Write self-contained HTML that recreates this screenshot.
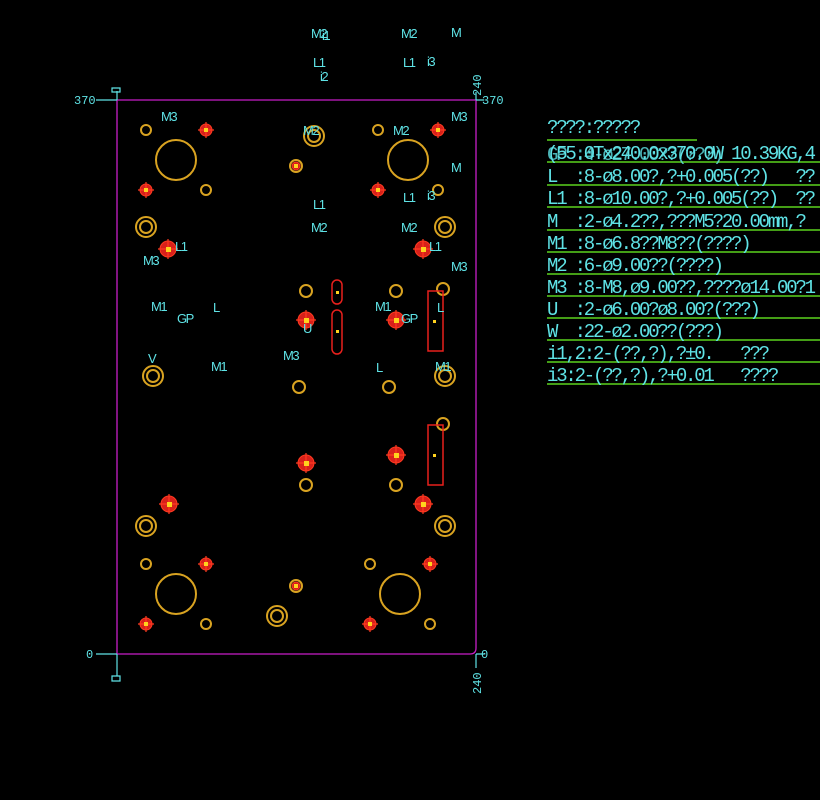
<!DOCTYPE html>
<html><head><meta charset="utf-8"><style>
html,body{margin:0;padding:0;background:#000;width:820px;height:800px;overflow:hidden}
svg{display:block}
.c{fill:#5fe3e6;font-family:"Liberation Mono",monospace}
.s{font-size:13px;letter-spacing:-1.5px;font-family:"Liberation Sans",sans-serif}
.t{font-size:19px;letter-spacing:-2.2px}
</style></head><body>
<svg width="820" height="800" viewBox="0 0 820 800" xmlns="http://www.w3.org/2000/svg">
<path d="M117 100 H476 V648 Q476 654 470 654 H117 Z" fill="none" stroke="#c81ec8" stroke-width="1.3"/>
<g stroke="#5fe3e6" fill="none" stroke-width="1.2">
<path d="M96 100 H117 M117 91 V100 M112 88 h8 v4 h-8z"/>
<path d="M476 100 H484 M476 92 V100"/>
<path d="M96 654 H117 M117 654 V676 M112 676 h8 v5 h-8z"/>
<path d="M476 654 H484 M476 654 V668"/>
</g>
<g class="c" font-size="12">
<text x="74" y="104">370</text>
<text x="482" y="104">370</text>
<text x="86" y="658">0</text>
<text x="481" y="658">0</text>
<text transform="translate(481,96) rotate(-90)">240</text>
<text transform="translate(481,694) rotate(-90)">240</text>
</g>
<g fill="none" stroke="#d9a321" stroke-width="2">
<circle cx="176" cy="160" r="20"/><circle cx="408" cy="160" r="20"/>
<circle cx="176" cy="594" r="20"/><circle cx="400" cy="594" r="20"/>
<circle cx="146" cy="130" r="5"/><circle cx="206" cy="190" r="5"/>
<circle cx="378" cy="130" r="5"/><circle cx="438" cy="190" r="5"/>
<circle cx="146" cy="564" r="5"/><circle cx="206" cy="624" r="5"/>
<circle cx="370" cy="564" r="5"/><circle cx="430" cy="624" r="5"/>
<circle cx="146" cy="227" r="10"/><circle cx="146" cy="227" r="6"/>
<circle cx="445" cy="227" r="10"/><circle cx="445" cy="227" r="6"/>
<circle cx="146" cy="526" r="10"/><circle cx="146" cy="526" r="6"/>
<circle cx="445" cy="526" r="10"/><circle cx="445" cy="526" r="6"/>
<circle cx="153" cy="376" r="10"/><circle cx="153" cy="376" r="6"/>
<circle cx="445" cy="376" r="10"/><circle cx="445" cy="376" r="6"/>
<circle cx="314" cy="136" r="10"/><circle cx="314" cy="136" r="6"/>
<circle cx="277" cy="616" r="10"/><circle cx="277" cy="616" r="6"/>
<circle cx="306" cy="291" r="6"/><circle cx="396" cy="291" r="6"/>
<circle cx="299" cy="387" r="6"/><circle cx="389" cy="387" r="6"/>
<circle cx="306" cy="485" r="6"/><circle cx="396" cy="485" r="6"/>
<circle cx="443" cy="289" r="6"/><circle cx="443" cy="424" r="6"/>
<circle cx="296" cy="166" r="6"/><circle cx="296" cy="586" r="6"/>
</g>
<g fill="#d8201a" stroke="#ff3a20" stroke-width="1">
<circle cx="206" cy="130" r="6"/><circle cx="146" cy="190" r="6"/>
<circle cx="438" cy="130" r="6"/><circle cx="378" cy="190" r="6"/>
<circle cx="206" cy="564" r="6"/><circle cx="146" cy="624" r="6"/>
<circle cx="430" cy="564" r="6"/><circle cx="370" cy="624" r="6"/>
<circle cx="168" cy="249" r="8"/><circle cx="423" cy="249" r="8"/>
<circle cx="306" cy="320" r="8"/><circle cx="396" cy="320" r="8"/>
<circle cx="306" cy="463" r="8"/><circle cx="396" cy="455" r="8"/>
<circle cx="169" cy="504" r="8"/><circle cx="423" cy="504" r="8"/>
<circle cx="296" cy="166" r="4"/><circle cx="296" cy="586" r="4"/>
</g>
<g stroke="#ff3a20" stroke-width="1.2">
<path d="M198 130h16M206 122v16M138 190h16M146 182v16M430 130h16M438 122v16M370 190h16M378 182v16M198 564h16M206 556v16M138 624h16M146 616v16M422 564h16M430 556v16M362 624h16M370 616v16"/>
<path d="M158 249h20M168 239v20M413 249h20M423 239v20M296 320h20M306 310v20M386 320h20M396 310v20M296 463h20M306 453v20M386 455h20M396 445v20M159 504h20M169 494v20M413 504h20M423 494v20"/>
</g>
<g fill="#ffd21e">
<rect x="204" y="128" width="4" height="4"/><rect x="144" y="188" width="4" height="4"/>
<rect x="436" y="128" width="4" height="4"/><rect x="376" y="188" width="4" height="4"/>
<rect x="204" y="562" width="4" height="4"/><rect x="144" y="622" width="4" height="4"/>
<rect x="428" y="562" width="4" height="4"/><rect x="368" y="622" width="4" height="4"/>
<rect x="166" y="247" width="5" height="5"/><rect x="421" y="247" width="5" height="5"/>
<rect x="304" y="318" width="5" height="5"/><rect x="394" y="318" width="5" height="5"/>
<rect x="304" y="461" width="5" height="5"/><rect x="394" y="453" width="5" height="5"/>
<rect x="167" y="502" width="5" height="5"/><rect x="421" y="502" width="5" height="5"/>
<rect x="294" y="164" width="4" height="4"/><rect x="294" y="584" width="4" height="4"/>
</g>
<g fill="none" stroke="#e8201c" stroke-width="1.5">
<rect x="332" y="280" width="10" height="24" rx="5"/>
<rect x="332" y="310" width="10" height="44" rx="5"/>
<rect x="428" y="291" width="15" height="60"/>
<rect x="428" y="425" width="15" height="60"/>
</g>
<g fill="#ffd21e"><rect x="336" y="291" width="3" height="3"/><rect x="336" y="330" width="3" height="3"/><rect x="433" y="320" width="3" height="3"/><rect x="433" y="454" width="3" height="3"/></g>
<g class="c s">
<text x="311" y="38">M2</text><text x="322" y="40">i1</text>
<text x="401" y="38">M2</text><text x="451" y="37">M</text>
<text x="313" y="67">L1</text><text x="320" y="81">i2</text>
<text x="403" y="67">L1</text><text x="427" y="66">i3</text>
<text x="161" y="121">M3</text><text x="451" y="121">M3</text>
<text x="303" y="135">M2</text><text x="393" y="135">M2</text>
<text x="451" y="172">M</text>
<text x="313" y="209">L1</text><text x="403" y="202">L1</text><text x="427" y="200">i3</text>
<text x="311" y="232">M2</text><text x="401" y="232">M2</text>
<text x="175" y="251">L1</text><text x="429" y="251">L1</text>
<text x="143" y="265">M3</text><text x="451" y="271">M3</text>
<text x="151" y="311">M1</text><text x="213" y="312">L</text>
<text x="177" y="323">GP</text>
<text x="375" y="311">M1</text><text x="437" y="312">L</text>
<text x="401" y="323">GP</text>
<text x="303" y="333">U</text>
<text x="283" y="360">M3</text>
<text x="148" y="363">V</text>
<text x="211" y="371">M1</text><text x="376" y="372">L</text><text x="435" y="371">M1</text>
</g>
<g stroke="#5ad21e" stroke-width="1.5">
<line x1="547" y1="140" x2="697" y2="140"/>
<line x1="547" y1="162" x2="820" y2="162"/>
<line x1="547" y1="185" x2="820" y2="185"/>
<line x1="547" y1="207" x2="820" y2="207"/>
<line x1="547" y1="230" x2="820" y2="230"/>
<line x1="547" y1="252" x2="820" y2="252"/>
<line x1="547" y1="274" x2="820" y2="274"/>
<line x1="547" y1="296" x2="820" y2="296"/>
<line x1="547" y1="318" x2="820" y2="318"/>
<line x1="547" y1="340" x2="820" y2="340"/>
<line x1="547" y1="362" x2="820" y2="362"/>
<line x1="547" y1="384" x2="820" y2="384"/>
</g>
<g class="c t">
<text x="547" y="133">????:?????</text>
<text x="547" y="159">(55.0Tx240.0x370.0W&#160;10.39KG,4</text>
<text x="547" y="160" opacity="0.8">GP&#160;:4-ø27.00??(???)</text>
<text x="547" y="182">L&#160;&#160;:8-ø8.00?,?+0.005(??)&#160;&#160;&#160;??</text>
<text x="547" y="204">L1&#160;:8-ø10.00?,?+0.005(??)&#160;&#160;??</text>
<text x="547" y="227">M&#160;&#160;:2-ø4.2??,???M5?20.00mm,?</text>
<text x="547" y="249">M1&#160;:8-ø6.8??M8??(????)</text>
<text x="547" y="271">M2&#160;:6-ø9.00??(????)</text>
<text x="547" y="293">M3&#160;:8-M8,ø9.00??,????ø14.00?1</text>
<text x="547" y="315">U&#160;&#160;:2-ø6.00?ø8.00?(???)</text>
<text x="547" y="337">W&#160;&#160;:22-ø2.00??(???)</text>
<text x="547" y="359">i1,2:2-(??,?),?±0.&#160;&#160;&#160;???</text>
<text x="547" y="381">i3:2-(??,?),?+0.01&#160;&#160;&#160;????</text>
</g>
</svg>
</body></html>
